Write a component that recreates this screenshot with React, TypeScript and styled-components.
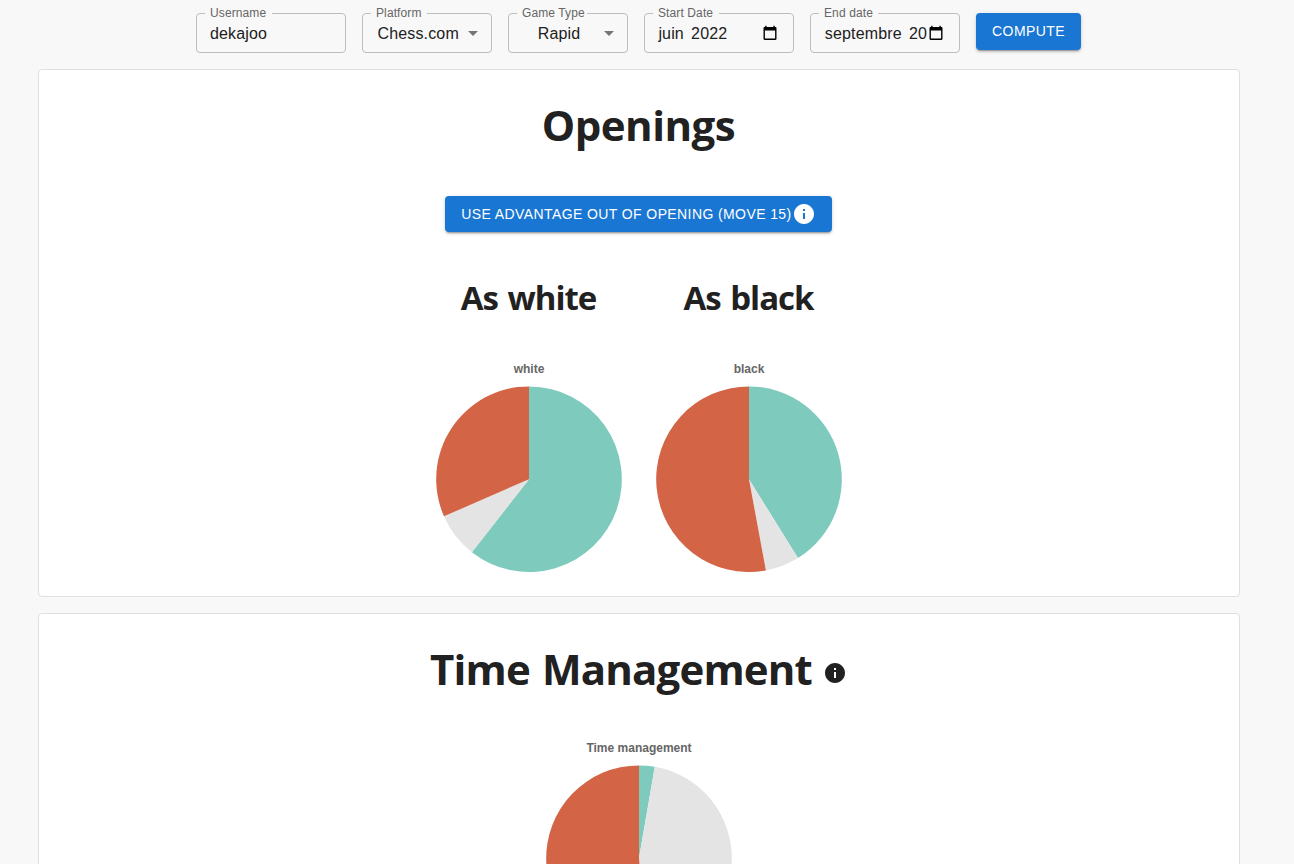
import React from "react";
import styled, { createGlobalStyle } from "styled-components";

const GlobalStyle = createGlobalStyle`
  * { box-sizing: border-box; }
  html { overflow: hidden; }
  body {
    margin: 0;
    background: #f8f8f8;
    color: #212121;
    font-family: "Liberation Sans", Arial, sans-serif;
  }
`;

const Page = styled.main`
  width: 1278px;
  height: 864px;
  overflow: hidden;
  padding: 6px 38px 0;
  display: flex;
  flex-direction: column;
`;

const Toolbar = styled.form`
  display: flex;
  justify-content: center;
  align-items: flex-start;
  gap: 16px;
  height: 63px;
  flex: none;
  margin-right: 1px;
`;

const Field = styled.fieldset<{ $width: number }>`
  width: ${(p) => p.$width}px;
  height: 47px;
  min-width: 0;
  margin: 0;
  padding: 0 13px 0 8px;
  border: 1px solid #bdbdbd;
  border-radius: 4px;
`;

const Legend = styled.legend<{ $width: number }>`
  width: ${(p) => p.$width}px;
  height: 14px;
  padding: 0 0 0 5px;
  font-size: 12px;
  line-height: 14px;
  letter-spacing: 0.11px;
  color: #666;
  white-space: nowrap;
`;

const FieldBody = styled.div<{ $inset: number }>`
  display: flex;
  align-items: center;
  height: 26px;
  padding-left: ${(p) => p.$inset}px;
`;

const Value = styled.span<{ $gap?: number }>`
  flex: 1;
  min-width: 0;
  white-space: nowrap;
  font-size: 16px;
  line-height: 23px;
  letter-spacing: 0.15px;
  word-spacing: ${(p) => p.$gap ?? 0}px;
`;

const Caret = styled.svg`
  flex: none;
  width: 24px;
  height: 24px;
  margin-right: -7px;
  fill: #757575;
`;

const Calendar = styled.svg`
  flex: none;
  width: 16px;
  height: 16px;
  margin-right: 2px;
`;

const Button = styled.button<{ $width: number }>`
  display: flex;
  align-items: center;
  justify-content: center;
  width: ${(p) => p.$width}px;
  height: 36.5px;
  padding: 0;
  border: 0;
  border-radius: 4px;
  background: #1976d2;
  color: #fff;
  font: 500 14px/24.5px "Liberation Sans", Arial, sans-serif;
  letter-spacing: 0.4px;
  text-transform: uppercase;
  white-space: nowrap;
  box-shadow: 0 3px 1px -2px rgba(0, 0, 0, 0.2), 0 2px 2px 0 rgba(0, 0, 0, 0.14),
    0 1px 5px 0 rgba(0, 0, 0, 0.12);
`;

const ComputeButton = styled(Button)`
  margin-top: 7px;
`;

const AdvantageButton = styled(Button)`
  height: 36px;
`;

const Card = styled.section<{ $height: number }>`
  flex: none;
  height: ${(p) => p.$height}px;
  margin-bottom: 16px;
  display: flex;
  flex-direction: column;
  align-items: center;
  background: #fff;
  border: 1px solid #e0e0e0;
  border-radius: 4px;
`;

const Title = styled.h1<{ $spacing: number }>`
  display: flex;
  align-items: center;
  gap: 11px;
  height: 60px;
  margin: 25px 1px 0 0;
  font: 700 42px/60px "Open Sans", sans-serif;
  letter-spacing: ${(p) => p.$spacing}px;
  word-spacing: 2px;
  white-space: nowrap;
`;

const Icon = styled.svg`
  flex: none;
  width: 24px;
  height: 24px;
  fill: currentColor;
`;

const TitleIcon = styled(Icon)`
  margin-top: 7px;
`;

const Actions = styled.div`
  margin: 41px 1px 0 0;
`;

const Charts = styled.div`
  display: flex;
  margin-top: 41px;
`;

const Column = styled.div`
  width: 220px;
  display: flex;
  flex-direction: column;
  align-items: center;
`;

const SubTitle = styled.h2<{ $spacing: number }>`
  height: 50px;
  margin: 0 1px 39px 0;
  font: 700 33px/50px "Open Sans", sans-serif;
  letter-spacing: ${(p) => p.$spacing}px;
  word-spacing: 2px;
  white-space: nowrap;
`;

const ChartTitle = styled.h3`
  height: 14px;
  margin: 0 0 10px;
  font: 700 12px/14px "Liberation Sans", Arial, sans-serif;
  color: #666;
`;

const TimeChart = styled.div`
  display: flex;
  flex-direction: column;
  align-items: center;
  margin-top: 42px;
`;

const InfoPath = () => (
  <path d="M12 2C6.48 2 2 6.48 2 12s4.48 10 10 10 10-4.48 10-10S17.52 2 12 2zm1 15h-2v-6h2v6zm0-8h-2V7h2v2z" />
);

const point = (deg: number) => {
  const a = (deg * Math.PI) / 180;
  return `${93 + 92.8 * Math.sin(a)} ${93.2 - 92.8 * Math.cos(a)}`;
};

const slice = (from: number, to: number) =>
  `M93 93.2L${point(from)}A92.8 92.8 0 ${to - from > 180 ? 1 : 0} 1 ${point(to)}Z`;

const PieSvg = styled.svg`
  display: block;
  width: 186px;
  height: 186px;
`;

function Pie({ win, draw }: { win: number; draw: number }) {
  return (
    <PieSvg viewBox="0 0 186 186">
      <path d={slice(0, win)} fill="#7ecbbd" />
      <path d={slice(win, draw)} fill="#e4e4e4" />
      <path d={slice(draw, 360)} fill="#d36446" />
    </PieSvg>
  );
}

type FieldProps = {
  label: string;
  value: string;
  width: number;
  legend: number;
  inset: number;
  kind?: "select" | "month";
};

function FormField({ label, value, width, legend, inset, kind }: FieldProps) {
  return (
    <Field $width={width}>
      <Legend $width={legend}>{label}</Legend>
      <FieldBody $inset={inset}>
        <Value $gap={kind === "month" ? 2.6 : 0}>{value}</Value>
        {kind === "select" && (
          <Caret viewBox="0 0 24 24">
            <path d="M7 10l5 5 5-5z" />
          </Caret>
        )}
        {kind === "month" && (
          <Calendar viewBox="0 0 16 16">
            <path
              fillRule="evenodd"
              d="M3.2 .7h1.4v1.3h6.8V.7h1.4v1.3h.5c.7 0 1.2.5 1.2 1.2v10.6c0 .7-.5 1.2-1.2 1.2H2.7c-.7 0-1.2-.5-1.2-1.2V3.2c0-.7.5-1.2 1.2-1.2h.5zM2.9 5.4v8.2h10.2V5.4z"
            />
          </Calendar>
        )}
      </FieldBody>
    </Field>
  );
}

export default function App() {
  return (
    <>
      <GlobalStyle />
      <Page>
        <Toolbar>
          <FormField label="Username" value="dekajoo" width={150} legend={67} inset={5} />
          <FormField label="Platform" value="Chess.com" width={130} legend={56} inset={6.5} kind="select" />
          <FormField label="Game Type" value="Rapid" width={120} legend={70} inset={20.8} kind="select" />
          <FormField label="Start Date" value="juin 2022" width={150} legend={66} inset={5.4} kind="month" />
          <FormField label="End date" value="septembre 20" width={150} legend={59} inset={5.8} kind="month" />
          <ComputeButton type="button" $width={105}>Compute</ComputeButton>
        </Toolbar>

        <Card $height={528}>
          <Title $spacing={-0.5}>Openings</Title>
          <Actions>
            <AdvantageButton type="button" $width={387}>
              Use advantage out of opening (move 15)
              <Icon viewBox="0 0 24 24"><InfoPath /></Icon>
            </AdvantageButton>
          </Actions>
          <Charts>
            <Column>
              <SubTitle $spacing={-1}>As white</SubTitle>
              <ChartTitle>white</ChartTitle>
              <Pie win={218} draw={246.4} />
            </Column>
            <Column>
              <SubTitle $spacing={-1}>As black</SubTitle>
              <ChartTitle>black</ChartTitle>
              <Pie win={148.2} draw={169.5} />
            </Column>
          </Charts>
        </Card>

        <Card $height={528}>
          <Title $spacing={-0.83}>
            Time Management
            <TitleIcon viewBox="0 0 24 24"><InfoPath /></TitleIcon>
          </Title>
          <TimeChart>
            <ChartTitle>Time management</ChartTitle>
            <Pie win={9.8} draw={175} />
          </TimeChart>
        </Card>
      </Page>
    </>
  );
}
